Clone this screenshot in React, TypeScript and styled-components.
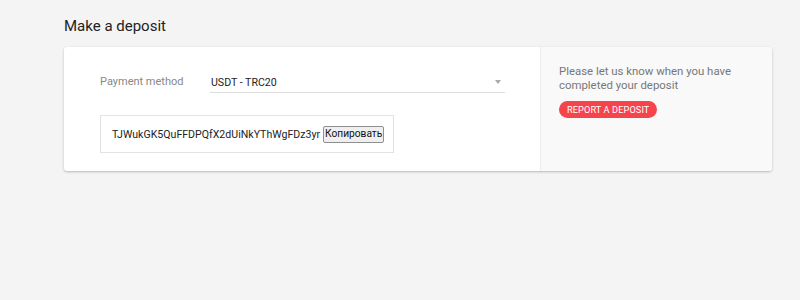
import React from 'react'
import styled, { createGlobalStyle } from 'styled-components'

const GlobalStyle = createGlobalStyle`
  html, body {
    margin: 0;
    padding: 0;
    background: #f4f4f4;
    font-family: Roboto, 'Liberation Sans', sans-serif;
  }
`

const Page = styled.div`
  width: 800px;
  height: 300px;
  box-sizing: border-box;
  padding: 16px 28px 0 64px;
`

const Title = styled.h1`
  margin: 0 0 11px;
  font-size: 15px;
  font-weight: 400;
  color: #222;
  line-height: 20px;
`

const Card = styled.div`
  display: flex;
  width: 708px;
  height: 124px;
  background: #fff;
  border-radius: 3px;
  box-shadow: 0 1px 3px rgba(0, 0, 0, 0.2), 0 1px 1px rgba(0, 0, 0, 0.06);
  overflow: hidden;
`

const Main = styled.div`
  width: 476px;
  box-sizing: border-box;
  padding: 25px 0 0 36px;
  display: flex;
  flex-direction: column;
  gap: 22px;
`

const Field = styled.div`
  display: flex;
  align-items: flex-end;
`

const Label = styled.div`
  width: 110px;
  font-size: 11px;
  color: #888;
  line-height: 20px;
  padding-bottom: 1px;
`

const Select = styled.div`
  width: 294px;
  height: 20px;
  display: flex;
  align-items: center;
  justify-content: space-between;
  border-bottom: 1px solid #ddd;
  font-size: 10.6px;
  color: #222;
  padding-left: 1px;
`

const Caret = styled.span`
  width: 0;
  height: 0;
  margin-right: 4px;
  border-left: 3.5px solid transparent;
  border-right: 3.5px solid transparent;
  border-top: 4px solid #aaa;
`

const AddressBox = styled.div`
  width: 294px;
  height: 38px;
  box-sizing: border-box;
  border: 1px solid #e2e2e2;
  display: flex;
  align-items: center;
  padding-left: 11px;
  gap: 3px;
  font-size: 10.6px;
  color: #222;
`

const CopyButton = styled.button`
  font-family: Roboto, 'Liberation Sans', sans-serif;
  font-size: 10.2px;
  color: #111;
  background: #efefef;
  border: 1px solid #8f8f8f;
  border-radius: 2px;
  padding: 0 1px;
  height: 17px;
  line-height: 14px;
`

const Side = styled.div`
  flex: 1;
  background: #f9f9fa;
  border-left: 1px solid #ececec;
  padding: 17px 18px 0;
`

const Note = styled.p`
  margin: 0 0 6px;
  font-size: 11.4px;
  line-height: 14px;
  color: #777;
`

const ReportButton = styled.button`
  font-family: Roboto, 'Liberation Sans', sans-serif;
  font-size: 9.2px;
  color: #fff;
  background: #f5444b;
  border: none;
  border-radius: 9px;
  height: 17px;
  padding: 0 8px;
  text-transform: uppercase;
  letter-spacing: 0.1px;
`

export default function App() {
  return (
    <>
      <GlobalStyle />
      <Page>
        <Title>Make a deposit</Title>
        <Card>
          <Main>
            <Field>
              <Label>Payment method</Label>
              <Select>
                USDT - TRC20
                <Caret />
              </Select>
            </Field>
            <AddressBox>
              TJWukGK5QuFFDPQfX2dUiNkYThWgFDz3yr
              <CopyButton>Копировать</CopyButton>
            </AddressBox>
          </Main>
          <Side>
            <Note>Please let us know when you have completed your deposit</Note>
            <ReportButton>Report a deposit</ReportButton>
          </Side>
        </Card>
      </Page>
    </>
  )
}
